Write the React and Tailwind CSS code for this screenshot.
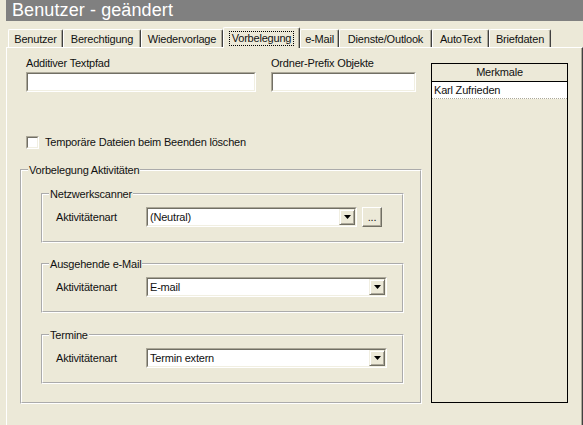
import React from "react";

const tabs = [
  { label: "Benutzer", w: "w-[55px]" },
  { label: "Berechtigung", w: "w-[78px]" },
  { label: "Wiedervorlage", w: "w-[82px]" },
  { label: "Vorbelegung", w: "w-[77px]", active: true },
  { label: "e-Mail", w: "w-[39px]" },
  { label: "Dienste/Outlook", w: "w-[93px]" },
  { label: "AutoText", w: "w-[57px]" },
  { label: "Briefdaten", w: "w-[62px]" },
];

// classic sunken edit field
const Sunken = ({ className = "", children }) => (
  <div
    className={`border border-t-[#aca899] border-l-[#aca899] border-b-white border-r-white ${className}`}
  >
    <div className="flex h-full w-full items-center border border-t-[#716f64] border-l-[#716f64] border-b-[#f1efe2] border-r-[#f1efe2] bg-white">
      {children}
    </div>
  </div>
);

const DropButton = () => (
  <div className="flex h-[16px] w-[16px] items-center justify-center border border-t-[#f1efe2] border-l-[#f1efe2] border-b-[#716f64] border-r-[#716f64] bg-[#ece9d8] shadow-[inset_1px_1px_0_#fff,inset_-1px_-1px_0_#aca899]">
    <svg width="7" height="4" viewBox="0 0 7 4">
      <path d="M0 0h7L3.5 4z" fill="#000" />
    </svg>
  </div>
);

const Select = ({ value, w }) => (
  <Sunken className={`h-[20px] ${w}`}>
    <span className="flex-1 truncate pl-[2px]">{value}</span>
    <DropButton />
  </Sunken>
);

const Group = ({ title, className = "", children }) => (
  <fieldset
    className={`border-2 border-white [border-style:groove] ${className}`}
  >
    <legend className="ml-[6px] bg-[#ece9d8] px-[1px] leading-[14px]">
      {title}
    </legend>
    {children}
  </fieldset>
);

const ActivityGroup = ({ title, value, extra, className = "" }) => (
  <Group title={title} className={`w-[363px] ${className}`}>
    <div className="mt-[6px] flex items-center pb-[14px] pl-[13px]">
      <span className="w-[90px]">Aktivitätenart</span>
      {extra ? (
        <>
          <Select value={value} w="w-[211px]" />
          <button className="ml-[5px] flex h-[20px] w-[20px] items-end justify-center border border-t-white border-l-white border-b-[#716f64] border-r-[#716f64] pb-[3px] leading-none shadow-[inset_-1px_-1px_0_#aca899]">
            ...
          </button>
        </>
      ) : (
        <Select value={value} w="w-[241px]" />
      )}
    </div>
  </Group>
);

export default function App() {
  return (
    <div className="flex h-[425px] w-[583px] flex-col overflow-hidden bg-[#ece9d8] font-['Liberation_Sans',Arial,sans-serif] text-[11px] tracking-[-0.2px] text-[#111]">
      {/* Title bar */}
      <div className="ml-[6px] h-[21px] bg-[#808080] pl-[6px] text-[18px] leading-[21px] tracking-[0.1px] text-white">
        Benutzer - geändert
      </div>

      {/* Tabs */}
      <div className="mt-[6px] flex items-end pl-[8px]">
        {tabs.map((t) =>
          t.active ? (
            <div
              key={t.label}
              className={`relative z-10 -mb-px flex h-[21px] ${t.w} items-center justify-center rounded-t-[2px] border-l border-t border-r border-l-white border-t-white border-r-[#404040] bg-[#ece9d8] shadow-[inset_-1px_0_0_#aca899]`}
            >
              <span className="border border-dotted border-black px-[2px] leading-[13px]">
                {t.label}
              </span>
            </div>
          ) : (
            <div
              key={t.label}
              className={`flex h-[18px] ${t.w} items-center justify-center rounded-t-[2px] border-l border-t border-r border-l-white border-t-white border-r-[#404040] pt-[1px] shadow-[inset_-1px_0_0_#aca899]`}
            >
              {t.label}
            </div>
          )
        )}
      </div>

      {/* Panel */}
      <div className="ml-[6px] flex flex-1 border-l border-t border-r border-l-white border-t-white border-r-[#404040] pl-[13px] shadow-[inset_-1px_0_0_#aca899]">
        {/* Left column */}
        <div className="flex w-[402px] flex-col">
          <div className="mt-[9px] flex pl-[6px]">
            <div className="flex flex-col">
              <span className="mb-[2px] leading-[13px]">Additiver Textpfad</span>
              <Sunken className="h-[20px] w-[230px]" />
            </div>
            <div className="ml-[15px] flex flex-col">
              <span className="mb-[2px] leading-[13px]">
                Ordner-Prefix Objekte
              </span>
              <Sunken className="h-[20px] w-[145px]" />
            </div>
          </div>

          <label className="mt-[44px] flex items-center pl-[6px]">
            <Sunken className="h-[13px] w-[13px]" />
            <span className="ml-[6px] leading-[13px]">
              Temporäre Dateien beim Beenden löschen
            </span>
          </label>

          <Group title="Vorbelegung Aktivitäten" className="mt-[14px] w-[402px] pb-[18px]">
            <div className="flex flex-col pl-[19px] pt-[10px]">
              <ActivityGroup title="Netzwerkscanner" value="(Neutral)" extra />
              <ActivityGroup
                title="Ausgehende e-Mail"
                value="E-mail"
                className="mt-[14px]"
              />
              <ActivityGroup
                title="Termine"
                value="Termin extern"
                className="mt-[15px]"
              />
            </div>
          </Group>
        </div>

        {/* Right column: Merkmale */}
        <div className="ml-[9px] mt-[15px] flex h-[340px] w-[137px] flex-col border border-black">
          <div className="flex h-[18px] items-center justify-center border-b border-black">
            Merkmale
          </div>
          <div className="flex h-[17px] items-center border-b border-dotted border-b-[#aca899] bg-white pl-[2px]">
            Karl Zufrieden
          </div>
        </div>
      </div>
    </div>
  );
}
